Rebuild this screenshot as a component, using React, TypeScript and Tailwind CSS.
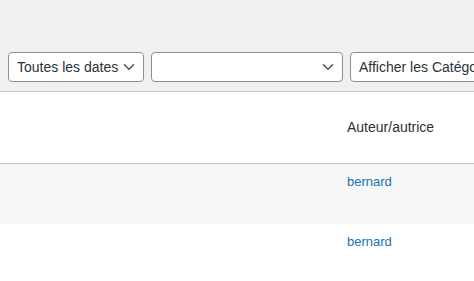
import React from 'react';

function Chevron() {
  return (
    <svg width="12" height="8" viewBox="0 0 12 8" className="shrink-0 text-[#50575e]">
      <polyline points="1.5,1.8 6,6.2 10.5,1.8" fill="none" stroke="currentColor" strokeWidth="1.6" strokeLinecap="round" strokeLinejoin="round" />
    </svg>
  );
}

function Select({ label, width, chevron = true }: { label: string; width: string; chevron?: boolean }) {
  return (
    <div
      className={`${width} h-[30px] shrink-0 flex items-center justify-between pl-[8px] pr-[8px] bg-white border border-[#8c8f94] rounded-[4px] text-[14px] text-[#2c3338] whitespace-nowrap overflow-hidden`}
    >
      <span>{label}</span>
      {chevron && <Chevron />}
    </div>
  );
}

export default function App() {
  return (
    <div
      className="w-[474px] h-[281px] overflow-hidden bg-white"
      style={{ fontFamily: '"Liberation Sans", Arial, sans-serif' }}
    >
      {/* Filters */}
      <div className="h-[92px] bg-[#f0f0f1] border-b border-[#c3c4c7] pt-[52px] pl-[8px] flex gap-[7px]">
        <Select label="Toutes les dates" width="w-[136px]" />
        <Select label="" width="w-[192px]" />
        <Select label="Afficher les Catégories" width="w-[200px]" chevron={false} />
      </div>

      {/* Table head */}
      <div className="h-[72px] border-b border-[#c3c4c7] flex items-center">
        <div className="w-[337px] shrink-0" />
        <div className="px-[10px] text-[14px] text-[#2c3338]">Auteur/autrice</div>
      </div>

      {/* Rows */}
      {['bg-[#f6f7f7]', 'bg-white'].map((bg, i) => (
        <div key={i} className={`${bg} h-[60px] flex`}>
          <div className="w-[337px] shrink-0" />
          <div className="px-[10px] pt-[8px] text-[13px] leading-[1.5] text-[#2271b1]">bernard</div>
        </div>
      ))}
    </div>
  );
}
